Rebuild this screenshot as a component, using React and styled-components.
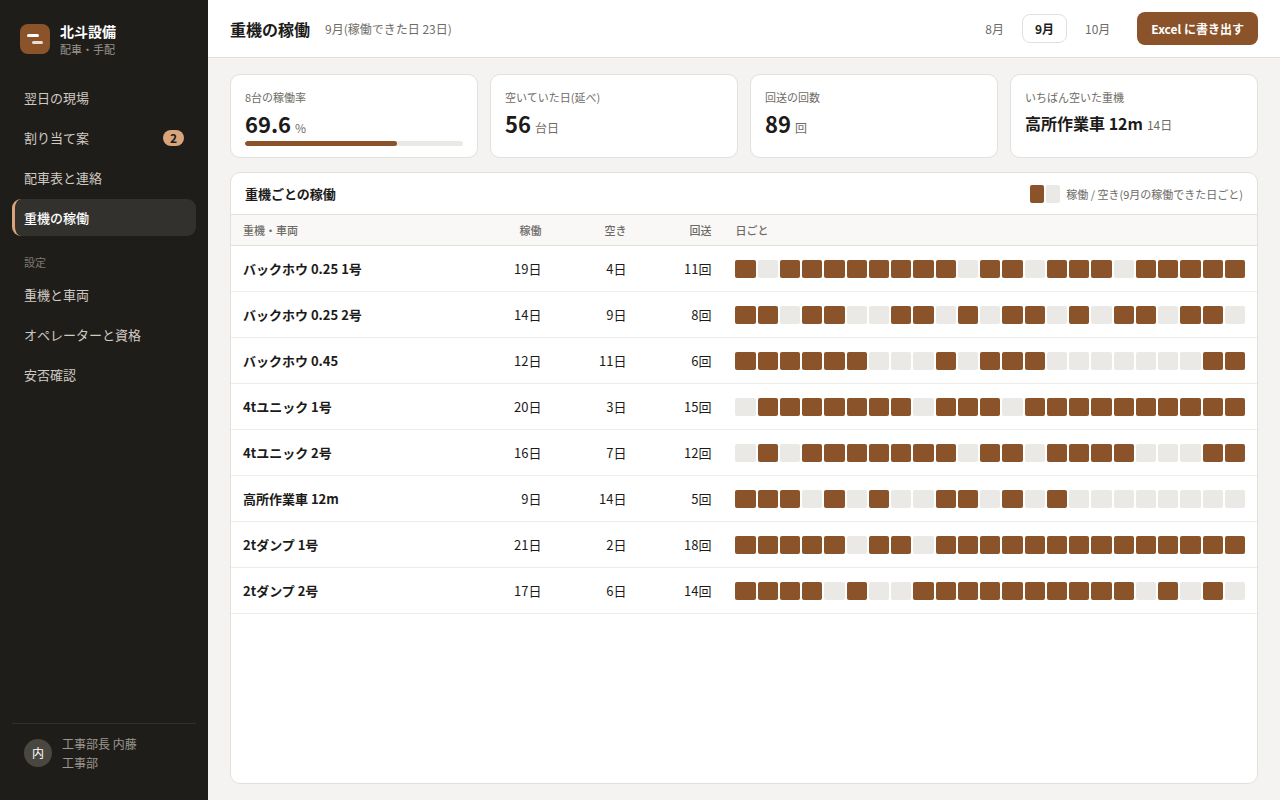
import React, { useState } from 'react';
import styled, { createGlobalStyle, ThemeProvider } from 'styled-components';

const theme = {
  ink: '#1c1b19',
  subInk: '#6e6b66',
  brown: '#8b532a',
  sand: '#d9a47a',
  bgColor: '#f4f3f1',
  boxColor: '#ffffff',
  lineColor: '#e2e0dc',
  idleColor: '#ebe9e5',
  sideColor: '#1f1d1a'
}

const GlobalStyle = createGlobalStyle`
  * {
    box-sizing: border-box;
  }
  body {
    margin: 0;
    font-family: "Noto Sans CJK JP", "Noto Sans", sans-serif;
    font-size: 13px;
    line-height: 20px;
    color: ${theme.ink};
    background-color: ${theme.bgColor};
  }
  button {
    font: inherit;
    color: inherit;
    cursor: pointer;
  }
  h1, h2, p {
    margin: 0;
  }
`

const Layout = styled.div`
  display: grid;
  grid-template-columns: 208px minmax(0, 1fr);
  min-height: 100vh;
`

const Sidebar = styled.aside`
  display: flex;
  flex-direction: column;
  padding: 21px 12px 20px;
  background-color: ${props => props.theme.sideColor};
`

const Brand = styled.div`
  display: flex;
  align-items: center;
  column-gap: 10px;
  padding: 0 8px 22px;
`

const BrandName = styled.div`
  font-size: 14px;
  font-weight: 700;
  color: #fff;
`

const BrandSub = styled.div`
  font-size: 11px;
  line-height: 16px;
  color: #9b968e;
`

const Nav = styled.nav`
  display: flex;
  flex-direction: column;
  row-gap: 3px;
`

const NavTitle = styled.div`
  padding: 15px 12px 3px;
  font-size: 11px;
  line-height: 16px;
  color: #7d7870;
`

const NavItem = styled.a`
  display: flex;
  align-items: center;
  justify-content: space-between;
  height: 37px;
  padding: 0 12px 0 9px;
  border-left: 3px solid ${props => props.$active ? props.theme.sand : 'transparent'};
  border-radius: 9px;
  background-color: ${props => props.$active ? '#33312d' : 'transparent'};
  color: ${props => props.$active ? '#fff' : '#cfcac2'};
  font-weight: ${props => props.$active ? 500 : 400};
  text-decoration: none;
`

const Badge = styled.span`
  padding: 0 7px;
  border-radius: 8px;
  background-color: ${props => props.theme.sand};
  color: ${props => props.theme.sideColor};
  font-size: 12px;
  font-weight: 700;
  line-height: 16px;
`

const User = styled.div`
  display: flex;
  align-items: center;
  column-gap: 10px;
  margin-top: auto;
  padding: 10px 12px 8px;
  border-top: 1px solid #33312d;
  font-size: 12px;
  line-height: 19px;
  color: #9b968e;
`

const Avatar = styled.div`
  width: 28px;
  height: 28px;
  border-radius: 50%;
  background-color: #4a4740;
  color: #fff;
  line-height: 28px;
  text-align: center;
`

const Main = styled.main`
  display: flex;
  flex-direction: column;
`

const Header = styled.header`
  display: flex;
  align-items: center;
  padding: 12px 22px;
  border-bottom: 1px solid ${props => props.theme.lineColor};
  background-color: ${props => props.theme.boxColor};
`

const Title = styled.h1`
  font-size: 16px;
  font-weight: 700;
  line-height: 24px;
`

const Period = styled.p`
  margin-left: 15px;
  font-size: 12px;
  color: ${props => props.theme.subInk};
`

const Months = styled.div`
  display: flex;
  column-gap: 5px;
  margin-left: auto;
`

const MonthBtn = styled.button`
  height: 29px;
  padding: 0 12px;
  border: 1px solid ${props => props.$active ? props.theme.lineColor : 'transparent'};
  border-radius: 8px;
  background-color: ${props => props.theme.boxColor};
  color: ${props => props.$active ? props.theme.ink : props.theme.subInk};
  font-size: 12px;
  font-weight: ${props => props.$active ? 700 : 400};
`

const ExportBtn = styled.button`
  height: 33px;
  margin-left: 14px;
  padding: 0 14px;
  border: 0;
  border-radius: 8px;
  background-color: ${props => props.theme.brown};
  color: #fff;
  font-size: 12px;
  font-weight: 700;
`

const Content = styled.div`
  display: flex;
  flex: 1;
  flex-direction: column;
  row-gap: 14px;
  padding: 16px 22px;
`

const Stats = styled.section`
  display: grid;
  grid-template-columns: repeat(4, 1fr);
  column-gap: 12px;
`

const StatCard = styled.div`
  padding: 13px 14px 11px;
  border: 1px solid ${props => props.theme.lineColor};
  border-radius: 10px;
  background-color: ${props => props.theme.boxColor};
`

const StatLabel = styled.div`
  font-size: 11px;
  line-height: 18px;
  color: ${props => props.theme.subInk};
`

const StatValue = styled.div`
  margin-top: 3px;
  font-size: ${props => props.$small ? '16px' : '22px'};
  font-weight: 700;
  line-height: 29px;
  span {
    margin-left: 4px;
    font-size: 12px;
    font-weight: 400;
    line-height: 12px;
    color: ${props => props.theme.subInk};
  }
`

const Track = styled.div`
  height: 5px;
  margin-top: 3px;
  border-radius: 3px;
  background-color: ${props => props.theme.idleColor};
  overflow: hidden;
`

const Fill = styled.div`
  height: 100%;
  border-radius: 3px;
  background-color: ${props => props.theme.brown};
`

const Panel = styled.section`
  flex: 1;
  border: 1px solid ${props => props.theme.lineColor};
  border-radius: 10px;
  background-color: ${props => props.theme.boxColor};
  overflow: hidden;
`

const PanelHead = styled.div`
  display: flex;
  align-items: center;
  justify-content: space-between;
  height: 42px;
  padding: 0 14px;
  border-bottom: 1px solid ${props => props.theme.lineColor};
  h2 {
    font-size: 13px;
    font-weight: 700;
  }
`

const Legend = styled.div`
  display: flex;
  align-items: center;
  column-gap: 6px;
  font-size: 11px;
  color: ${props => props.theme.subInk};
`

const Swatches = styled.div`
  display: grid;
  grid-template-columns: 14px 14px;
  column-gap: 2px;
`

const Table = styled.table`
  width: 100%;
  table-layout: fixed;
  border-collapse: separate;
  border-spacing: 0;
  th, td {
    padding: 0 12px;
    text-align: left;
  }
  thead th {
    height: 31px;
    border-bottom: 1px solid ${props => props.theme.lineColor};
    background-color: #f9f8f6;
    color: ${props => props.theme.subInk};
    font-size: 11px;
    font-weight: 500;
  }
  tbody th, tbody td {
    height: 46px;
    border-bottom: 1px solid #efedea;
  }
  tbody th {
    font-weight: 700;
  }
  .num {
    width: 85px;
    text-align: right;
    font-variant-numeric: tabular-nums;
  }
  .days {
    width: 52%;
  }
`

const Days = styled.div`
  display: grid;
  grid-template-columns: repeat(23, 1fr);
  column-gap: 2px;
`

const Day = styled.div`
  height: 18px;
  border-radius: 2px;
  background-color: ${props => props.$on ? props.theme.brown : props.theme.idleColor};
`

const MENU = [
  { name: "翌日の現場" },
  { name: "割り当て案", count: 2 },
  { name: "配車表と連絡" },
  { name: "重機の稼働", active: true }
]

const SETTING_MENU = [
  { name: "重機と車両" },
  { name: "オペレーターと資格" },
  { name: "安否確認" }
]

const MONTHS = ["8月", "9月", "10月"]

// days: 1 = 稼働, 0 = 空き
const MACHINES = [
  { name: "バックホウ 0.25 1号", moves: 11, days: "10111111110110111011111" },
  { name: "バックホウ 0.25 2号", moves: 8, days: "11011001101011010110110" },
  { name: "バックホウ 0.45", moves: 6, days: "11111100010111000000011" },
  { name: "4tユニック 1号", moves: 15, days: "01111111011101111111111" },
  { name: "4tユニック 2号", moves: 12, days: "01011111110110111100011" },
  { name: "高所作業車 12m", moves: 5, days: "11101010011010100000000" },
  { name: "2tダンプ 1号", moves: 18, days: "11111011011111111111111" },
  { name: "2tダンプ 2号", moves: 14, days: "11110100111111111101010" }
]

const Logo = () => (<svg width="30" height="30" viewBox="0 0 30 30" aria-hidden="true">
  <rect width="30" height="30" rx="8" fill={theme.brown} />
  <rect x="7" y="10" width="12" height="3" rx="1.5" fill="#fff" />
  <rect x="12" y="17" width="11" height="3" rx="1.5" fill="#ecdccf" />
</svg>)

const MenuItem = ({ item }) => (<NavItem
  href="#"
  $active={item.active}
  aria-current={item.active ? "page" : undefined}
>
  {item.name}
  {item.count && <Badge>{item.count}</Badge>}
</NavItem>)

const MachineRow = ({ machine }) => {
  const days = machine.days.split("")
  const worked = days.filter(day => day === "1").length
  return (<tr>
    <th scope="row">{machine.name}</th>
    <td className="num">{`${worked}日`}</td>
    <td className="num">{`${days.length - worked}日`}</td>
    <td className="num">{`${machine.moves}回`}</td>
    <td>
      <Days>
        {days.map((day, index) => <Day key={index} $on={day === "1"} />)}
      </Days>
    </td>
  </tr>)
}

const App = () => {
  const [month, setMonth] = useState("9月")
  return (<ThemeProvider theme={theme}>
    <GlobalStyle />
    <Layout>
      <Sidebar>
        <Brand>
          <Logo />
          <div>
            <BrandName>北斗設備</BrandName>
            <BrandSub>配車・手配</BrandSub>
          </div>
        </Brand>
        <Nav>
          {MENU.map(item => <MenuItem key={item.name} item={item} />)}
          <NavTitle>設定</NavTitle>
          {SETTING_MENU.map(item => <MenuItem key={item.name} item={item} />)}
        </Nav>
        <User>
          <Avatar>内</Avatar>
          <div>
            <div>工事部長 内藤</div>
            <div>工事部</div>
          </div>
        </User>
      </Sidebar>
      <Main>
        <Header>
          <Title>重機の稼働</Title>
          <Period>9月(稼働できた日 23日)</Period>
          <Months>
            {MONTHS.map(name => <MonthBtn
              key={name}
              type="button"
              $active={name === month}
              onClick={() => setMonth(name)}
            >{name}</MonthBtn>)}
          </Months>
          <ExportBtn type="button">Excel に書き出す</ExportBtn>
        </Header>
        <Content>
          <Stats>
            <StatCard>
              <StatLabel>8台の稼働率</StatLabel>
              <StatValue>69.6<span>%</span></StatValue>
              <Track><Fill style={{ width: "69.6%" }} /></Track>
            </StatCard>
            <StatCard>
              <StatLabel>空いていた日(延べ)</StatLabel>
              <StatValue>56<span>台日</span></StatValue>
            </StatCard>
            <StatCard>
              <StatLabel>回送の回数</StatLabel>
              <StatValue>89<span>回</span></StatValue>
            </StatCard>
            <StatCard>
              <StatLabel>いちばん空いた重機</StatLabel>
              <StatValue $small>高所作業車 12m<span>14日</span></StatValue>
            </StatCard>
          </Stats>
          <Panel>
            <PanelHead>
              <h2>重機ごとの稼働</h2>
              <Legend>
                <Swatches>
                  <Day $on />
                  <Day />
                </Swatches>
                稼働 / 空き(9月の稼働できた日ごと)
              </Legend>
            </PanelHead>
            <Table>
              <thead>
                <tr>
                  <th scope="col">重機・車両</th>
                  <th scope="col" className="num">稼働</th>
                  <th scope="col" className="num">空き</th>
                  <th scope="col" className="num">回送</th>
                  <th scope="col" className="days">日ごと</th>
                </tr>
              </thead>
              <tbody>
                {MACHINES.map(machine => <MachineRow key={machine.name} machine={machine} />)}
              </tbody>
            </Table>
          </Panel>
        </Content>
      </Main>
    </Layout>
  </ThemeProvider>);
}

export default App;
